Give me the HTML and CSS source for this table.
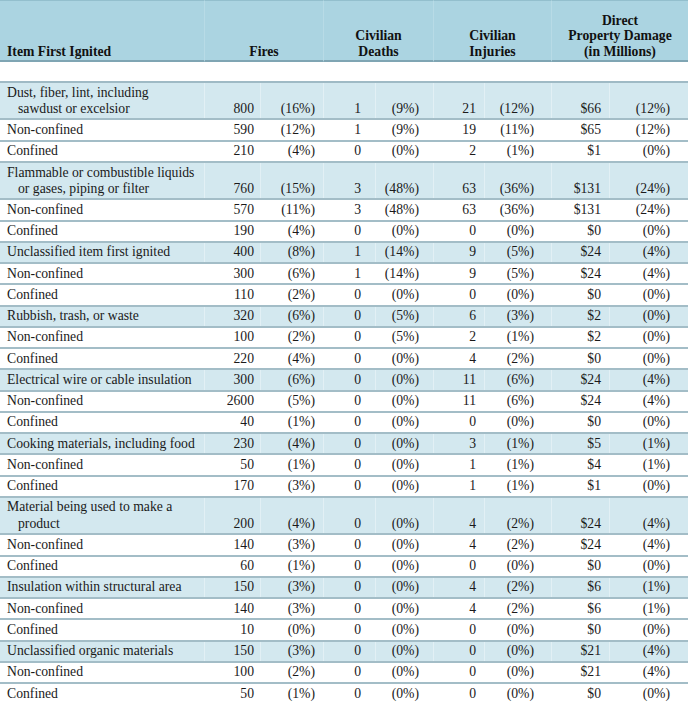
FILE: index.html
```html
<!DOCTYPE html>
<html>
<head>
<meta charset="utf-8">
<link rel="stylesheet" href="styles.css">
</head>
<body>
<table class="fire-table">
  <colgroup>
    <col class="c-item"><col class="c-fn"><col class="c-fp"><col class="c-dn"><col class="c-dp"><col class="c-in"><col class="c-ip"><col class="c-mn"><col class="c-mp">
  </colgroup>
  <thead>
    <tr class="head-row">
      <th class="h-item">Item First Ignited</th>
      <th colspan="2" class="h-grp">Fires</th>
      <th colspan="2" class="h-grp">Civilian<br>Deaths</th>
      <th colspan="2" class="h-grp">Civilian<br>Injuries</th>
      <th colspan="2" class="h-grp h-last">Direct<br>Property Damage<br>(in Millions)</th>
    </tr>
  </thead>
  <tbody>
    <tr class="spacer"><td colspan="9"></td></tr>

    <tr class="grp"><td class="name">Dust, fiber, lint, including<br>sawdust or excelsior</td><td class="fn">800</td><td class="fp">(16%)</td><td class="dn">1</td><td class="dp">(9%)</td><td class="in">21</td><td class="ip">(12%)</td><td class="mn">$66</td><td class="mp">(12%)</td></tr>
    <tr><td class="name">Non-confined</td><td class="fn">590</td><td class="fp">(12%)</td><td class="dn">1</td><td class="dp">(9%)</td><td class="in">19</td><td class="ip">(11%)</td><td class="mn">$65</td><td class="mp">(12%)</td></tr>
    <tr><td class="name">Confined</td><td class="fn">210</td><td class="fp">(4%)</td><td class="dn">0</td><td class="dp">(0%)</td><td class="in">2</td><td class="ip">(1%)</td><td class="mn">$1</td><td class="mp">(0%)</td></tr>

    <tr class="grp"><td class="name">Flammable or combustible liquids<br>or gases, piping or filter</td><td class="fn">760</td><td class="fp">(15%)</td><td class="dn">3</td><td class="dp">(48%)</td><td class="in">63</td><td class="ip">(36%)</td><td class="mn">$131</td><td class="mp">(24%)</td></tr>
    <tr><td class="name">Non-confined</td><td class="fn">570</td><td class="fp">(11%)</td><td class="dn">3</td><td class="dp">(48%)</td><td class="in">63</td><td class="ip">(36%)</td><td class="mn">$131</td><td class="mp">(24%)</td></tr>
    <tr><td class="name">Confined</td><td class="fn">190</td><td class="fp">(4%)</td><td class="dn">0</td><td class="dp">(0%)</td><td class="in">0</td><td class="ip">(0%)</td><td class="mn">$0</td><td class="mp">(0%)</td></tr>

    <tr class="grp"><td class="name">Unclassified item first ignited</td><td class="fn">400</td><td class="fp">(8%)</td><td class="dn">1</td><td class="dp">(14%)</td><td class="in">9</td><td class="ip">(5%)</td><td class="mn">$24</td><td class="mp">(4%)</td></tr>
    <tr><td class="name">Non-confined</td><td class="fn">300</td><td class="fp">(6%)</td><td class="dn">1</td><td class="dp">(14%)</td><td class="in">9</td><td class="ip">(5%)</td><td class="mn">$24</td><td class="mp">(4%)</td></tr>
    <tr><td class="name">Confined</td><td class="fn">110</td><td class="fp">(2%)</td><td class="dn">0</td><td class="dp">(0%)</td><td class="in">0</td><td class="ip">(0%)</td><td class="mn">$0</td><td class="mp">(0%)</td></tr>

    <tr class="grp"><td class="name">Rubbish, trash, or waste</td><td class="fn">320</td><td class="fp">(6%)</td><td class="dn">0</td><td class="dp">(5%)</td><td class="in">6</td><td class="ip">(3%)</td><td class="mn">$2</td><td class="mp">(0%)</td></tr>
    <tr><td class="name">Non-confined</td><td class="fn">100</td><td class="fp">(2%)</td><td class="dn">0</td><td class="dp">(5%)</td><td class="in">2</td><td class="ip">(1%)</td><td class="mn">$2</td><td class="mp">(0%)</td></tr>
    <tr><td class="name">Confined</td><td class="fn">220</td><td class="fp">(4%)</td><td class="dn">0</td><td class="dp">(0%)</td><td class="in">4</td><td class="ip">(2%)</td><td class="mn">$0</td><td class="mp">(0%)</td></tr>

    <tr class="grp"><td class="name">Electrical wire or cable insulation</td><td class="fn">300</td><td class="fp">(6%)</td><td class="dn">0</td><td class="dp">(0%)</td><td class="in">11</td><td class="ip">(6%)</td><td class="mn">$24</td><td class="mp">(4%)</td></tr>
    <tr><td class="name">Non-confined</td><td class="fn">2600</td><td class="fp">(5%)</td><td class="dn">0</td><td class="dp">(0%)</td><td class="in">11</td><td class="ip">(6%)</td><td class="mn">$24</td><td class="mp">(4%)</td></tr>
    <tr><td class="name">Confined</td><td class="fn">40</td><td class="fp">(1%)</td><td class="dn">0</td><td class="dp">(0%)</td><td class="in">0</td><td class="ip">(0%)</td><td class="mn">$0</td><td class="mp">(0%)</td></tr>

    <tr class="grp"><td class="name">Cooking materials, including food</td><td class="fn">230</td><td class="fp">(4%)</td><td class="dn">0</td><td class="dp">(0%)</td><td class="in">3</td><td class="ip">(1%)</td><td class="mn">$5</td><td class="mp">(1%)</td></tr>
    <tr><td class="name">Non-confined</td><td class="fn">50</td><td class="fp">(1%)</td><td class="dn">0</td><td class="dp">(0%)</td><td class="in">1</td><td class="ip">(1%)</td><td class="mn">$4</td><td class="mp">(1%)</td></tr>
    <tr><td class="name">Confined</td><td class="fn">170</td><td class="fp">(3%)</td><td class="dn">0</td><td class="dp">(0%)</td><td class="in">1</td><td class="ip">(1%)</td><td class="mn">$1</td><td class="mp">(0%)</td></tr>

    <tr class="grp"><td class="name">Material being used to make a<br>product</td><td class="fn">200</td><td class="fp">(4%)</td><td class="dn">0</td><td class="dp">(0%)</td><td class="in">4</td><td class="ip">(2%)</td><td class="mn">$24</td><td class="mp">(4%)</td></tr>
    <tr><td class="name">Non-confined</td><td class="fn">140</td><td class="fp">(3%)</td><td class="dn">0</td><td class="dp">(0%)</td><td class="in">4</td><td class="ip">(2%)</td><td class="mn">$24</td><td class="mp">(4%)</td></tr>
    <tr><td class="name">Confined</td><td class="fn">60</td><td class="fp">(1%)</td><td class="dn">0</td><td class="dp">(0%)</td><td class="in">0</td><td class="ip">(0%)</td><td class="mn">$0</td><td class="mp">(0%)</td></tr>

    <tr class="grp"><td class="name">Insulation within structural area</td><td class="fn">150</td><td class="fp">(3%)</td><td class="dn">0</td><td class="dp">(0%)</td><td class="in">4</td><td class="ip">(2%)</td><td class="mn">$6</td><td class="mp">(1%)</td></tr>
    <tr><td class="name">Non-confined</td><td class="fn">140</td><td class="fp">(3%)</td><td class="dn">0</td><td class="dp">(0%)</td><td class="in">4</td><td class="ip">(2%)</td><td class="mn">$6</td><td class="mp">(1%)</td></tr>
    <tr><td class="name">Confined</td><td class="fn">10</td><td class="fp">(0%)</td><td class="dn">0</td><td class="dp">(0%)</td><td class="in">0</td><td class="ip">(0%)</td><td class="mn">$0</td><td class="mp">(0%)</td></tr>

    <tr class="grp"><td class="name">Unclassified organic materials</td><td class="fn">150</td><td class="fp">(3%)</td><td class="dn">0</td><td class="dp">(0%)</td><td class="in">0</td><td class="ip">(0%)</td><td class="mn">$21</td><td class="mp">(4%)</td></tr>
    <tr><td class="name">Non-confined</td><td class="fn">100</td><td class="fp">(2%)</td><td class="dn">0</td><td class="dp">(0%)</td><td class="in">0</td><td class="ip">(0%)</td><td class="mn">$21</td><td class="mp">(4%)</td></tr>
    <tr><td class="name">Confined</td><td class="fn">50</td><td class="fp">(1%)</td><td class="dn">0</td><td class="dp">(0%)</td><td class="in">0</td><td class="ip">(0%)</td><td class="mn">$0</td><td class="mp">(0%)</td></tr>
  </tbody>
</table>
</body>
</html>
```

FILE: styles.css
```css
html, body {
  margin: 0;
  padding: 0;
  background: #ffffff;
}

body {
  font-family: "Liberation Serif", "Times New Roman", serif;
  font-size: 13.7px;
  color: #1a1a1a;
}

.fire-table {
  width: 688px;
  table-layout: fixed;
  border-collapse: separate;
  border-spacing: 0;
}

.c-item { width: 204px; }
.c-fn { width: 56px; }
.c-fp { width: 63px; }
.c-dn { width: 52px; }
.c-dp { width: 58px; }
.c-in { width: 51px; }
.c-ip { width: 67px; }
.c-mn { width: 58px; }
.c-mp { width: 79px; }

.head-row {
  height: 62px;
}

.head-row th {
  background: #abd4e1;
  border-top: 1px solid #93bfcd;
  border-bottom: 2px solid #7fa5b3;
  vertical-align: bottom;
  font-weight: bold;
  line-height: 15.5px;
  padding: 0 0 1px 0;
  color: #111;
}

.h-item {
  text-align: left;
  padding-left: 7px !important;
}

.h-grp {
  text-align: center;
  border-left: 1px solid #b8dbe6;
}

.spacer {
  height: 21px;
}

.spacer td {
  border-bottom: 2px solid #9fbac5;
  padding: 0;
}

tbody td {
  line-height: 16.2px;
  padding: 1.55px 0 1.5px 0;
  border-bottom: 2px solid #a3bdc7;
  vertical-align: bottom;
  text-align: right;
  white-space: nowrap;
}

.grp td {
  background: #d3e8ef;
}

.grp td + td {
  box-shadow: inset 1px 0 0 #e2f0f5;
}

tbody td.name {
  text-align: left;
  padding-left: 18px;
  text-indent: -11px;
}

.fn { padding-right: 6px; }
.fp { padding-right: 8px; }
.dn { padding-right: 14px; }
.dp { padding-right: 14px; }
.in { padding-right: 8px; }
.ip { padding-right: 17px; }
.mn { padding-right: 8px; }
.mp { padding-right: 18px; }
```
